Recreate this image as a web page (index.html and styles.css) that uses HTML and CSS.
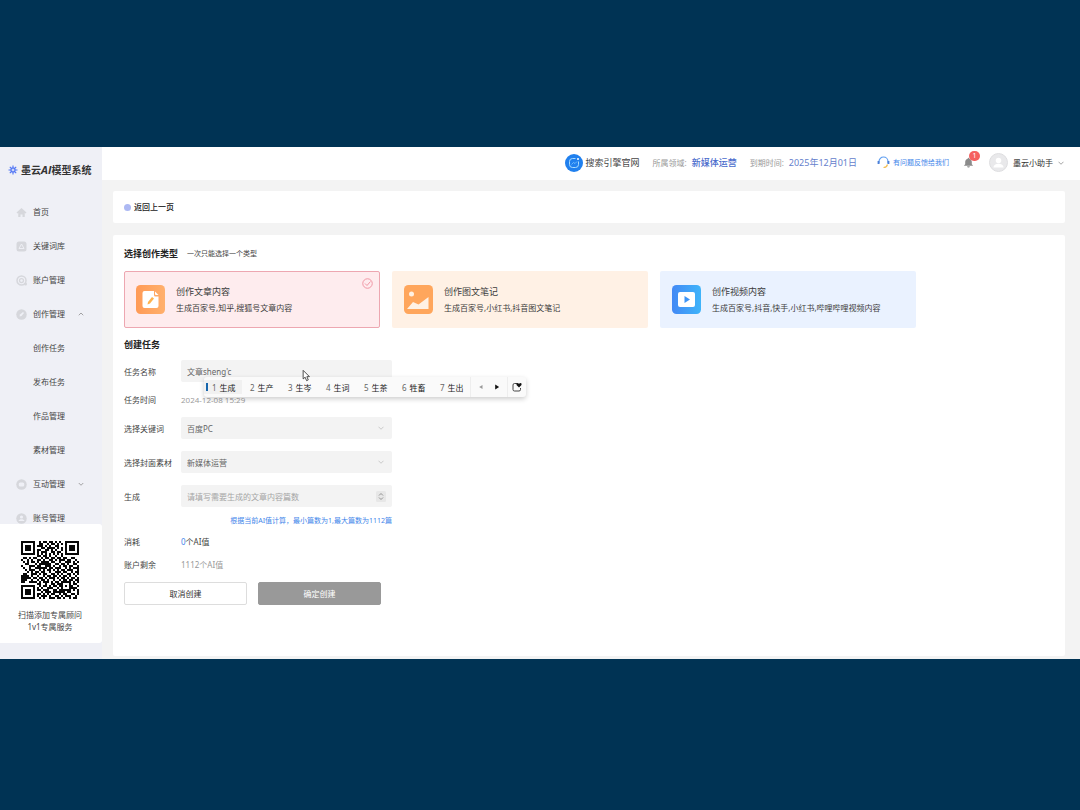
FILE: index.html
```html
<!DOCTYPE html>
<html lang="zh-CN">
<head>
<meta charset="utf-8">
<title>墨云AI模型系统</title>
<link rel="stylesheet" href="styles.css">
</head>
<body>
<div class="app">
  <aside class="sidebar">
    <div class="brand">
      <svg class="brand-mark" viewBox="0 0 20 20" fill="none" stroke="#4f74f5" stroke-width="2.2"><path d="M10 1v18M1 10h18M3.6 3.6l12.8 12.8M16.4 3.6L3.6 16.4"/><circle cx="10" cy="10" r="5" stroke-width="1.2"/><circle cx="10" cy="10" r="2.2" fill="#eff0f6" stroke="none"/></svg>
      <span>墨云<i>AI</i>模型系统</span>
    </div>
    <nav class="nav">
      <a href="#" class="nav-item"><svg class="nav-icon" viewBox="0 0 22 22" fill="#d6d7dc"><path d="M11 2L1 11l2 2 1.500-1V20h4.500v-5h4v5h4.500v-8l1.500 1 2-2z"/></svg>首页</a>
      <a href="#" class="nav-item"><svg class="nav-icon" viewBox="0 0 22 22"><rect x="1" y="1" width="20" height="20" rx="5" fill="#d6d7dc"/><path d="M11 6l-5 9h10z" fill="none" stroke="#eff0f6" stroke-width="1.800"/></svg>关键词库</a>
      <a href="#" class="nav-item"><svg class="nav-icon" viewBox="0 0 22 22"><circle cx="11" cy="11" r="9" fill="none" stroke="#d6d7dc" stroke-width="3"/><circle cx="11" cy="11" r="4" fill="none" stroke="#d6d7dc" stroke-width="2.500"/><circle cx="19" cy="18" r="3" fill="#d6d7dc"/></svg>账户管理</a>
      <a href="#" class="nav-item"><svg class="nav-icon" viewBox="0 0 22 22"><circle cx="11" cy="11" r="10.500" fill="#d6d7dc"/><path d="M7 15l1-4 6-5 2 2-5 6z" fill="#eff0f6"/></svg>创作管理<svg class="chevron" viewBox="0 0 12 12"><path d="M1.500 8.500L6 4l4.500 4.500"/></svg></a>
      <a href="#" class="nav-item nav-sub">创作任务</a>
      <a href="#" class="nav-item nav-sub">发布任务</a>
      <a href="#" class="nav-item nav-sub">作品管理</a>
      <a href="#" class="nav-item nav-sub">素材管理</a>
      <a href="#" class="nav-item"><svg class="nav-icon" viewBox="0 0 22 22"><circle cx="11" cy="11" r="10.500" fill="#d6d7dc"/><rect x="5.500" y="7" width="11" height="8" rx="3" fill="#eff0f6"/></svg>互动管理<svg class="chevron" viewBox="0 0 12 12"><path d="M1.500 4L6 8.500 10.500 4"/></svg></a>
      <a href="#" class="nav-item"><svg class="nav-icon" viewBox="0 0 22 22"><circle cx="11" cy="11" r="10.500" fill="#d6d7dc"/><circle cx="11" cy="8" r="3.200" fill="#eff0f6"/><path d="M5 16c1-5 11-5 12 0z" fill="#eff0f6"/></svg>账号管理</a>
    </nav>
    <div class="contact">
      <svg class="qr" id="qr" viewBox="0 0 29 29" shape-rendering="crispEdges" role="img"></svg>
      <p>扫描添加专属顾问<br>1v1专属服务</p>
    </div>
  </aside>

  <div class="page">
    <header class="topbar">
      <a href="#" class="site"><svg class="site-icon" viewBox="0 0 36 36"><circle cx="18" cy="18" r="18" fill="#2080ee"/><path d="M21 9h-6q-6 0-6 6v6q0 6 6 6h6q6 0 6-6v-6" fill="none" stroke="#a9dcff" stroke-width="2"/><path d="M13 21l4-4 3 2 4-4" fill="none" stroke="#7cc4ff" stroke-width="1.600"/><circle cx="26" cy="10" r="2" fill="#fff"/></svg>搜索引擎官网</a>
      <div class="meta">所属领域: <b>新媒体运营</b></div>
      <div class="meta">到期时间: <span>2025年12月01日</span></div>
      <a href="#" class="feedback"><svg class="feedback-icon" viewBox="0 0 26 26" fill="none" stroke-width="2.400"><path d="M4 15V11a9 9 0 0 1 18 0v4" stroke="#5b9cf0"/><path d="M3 10v6M23 10v6" stroke="#4c7fd8" stroke-width="3.600"/><path d="M21 17c-1 4-4 6-8 6" stroke="#f3bf55"/></svg>有问题反馈给我们</a>
      <button class="bell" aria-label="消息"><svg viewBox="0 0 20 20" fill="#8b8b8b"><path d="M10 1.500c-1 0-1.500.700-1.500 1.500C5.500 3.700 4 6 4 9v4l-2.500 3h17L16 13V9c0-3-1.500-5.300-4.500-6 0-.800-.500-1.500-1.500-1.500zM7.500 17h5c0 3-5 3-5 0z"/></svg><span class="badge">1</span></button>
      <button class="user"><svg class="avatar" viewBox="0 0 38 38"><circle cx="19" cy="19" r="18" fill="#e9e9eb" stroke="#dedee0" stroke-width="2"/><circle cx="19" cy="15" r="5.500" fill="#fff"/><path d="M9 29c0-10 20-10 20 0z" fill="#fff"/></svg>墨云小助手<svg class="chevron" viewBox="0 0 12 12"><path d="M1 3.500L6 8.500l5-5"/></svg></button>
    </header>

    <main class="content">
      <section class="panel back-panel"><a href="#" class="back"><span class="dot"></span>返回上一页</a></section>

      <section class="panel work">
        <div class="heading"><h2>选择创作类型</h2><small>一次只能选择一个类型</small></div>
        <div class="types">
          <button class="type type-article">
            <svg class="type-icon" viewBox="0 0 58 58"><defs><linearGradient id="go" x2="1" y2="0"><stop stop-color="#ff9a56"/><stop offset="1" stop-color="#ffb06c"/></linearGradient></defs><rect width="58" height="58" rx="9" fill="url(#go)"/><path d="M17 12h19v8q0 3 3 3h6v19q0 4-4 4H17q-4 0-4-4V16q0-4 4-4z" fill="#fff"/><path d="M38 13v5q0 2 2 2h5z" fill="#fff"/><path d="M23 39l1-5 8-10 4 3-8 10z" fill="#ffb34d"/></svg>
            <span class="type-text"><span class="type-name">创作文章内容</span><span>生成百家号,知乎,搜狐号文章内容</span></span>
            <svg class="check" viewBox="0 0 22 22" fill="none" stroke="#ee8d9c" stroke-width="1.800"><circle cx="11" cy="11" r="9.500"/><path d="M6 11l4 4 7-8"/></svg>
          </button>
          <button class="type type-note">
            <svg class="type-icon" viewBox="0 0 58 58"><rect width="58" height="58" rx="9" fill="#ffa65c"/><circle cx="15" cy="18" r="5" fill="#fff1e4"/><path d="M6 48l12-14 11 5 20-15v24z" fill="#fff1e4"/></svg>
            <span class="type-text"><span class="type-name">创作图文笔记</span><span>生成百家号,小红书,抖音图文笔记</span></span>
          </button>
          <button class="type type-video">
            <svg class="type-icon" viewBox="0 0 58 58"><defs><linearGradient id="gb" x2="1" y2="0"><stop stop-color="#4389f5"/><stop offset="1" stop-color="#3fb4fa"/></linearGradient></defs><rect width="58" height="58" rx="9" fill="url(#gb)"/><rect x="12" y="14" width="34" height="30" rx="4" fill="#fff"/><path d="M25 22l11 7-11 7z" fill="#3e95f7"/></svg>
            <span class="type-text"><span class="type-name">创作视频内容</span><span>生成百家号,抖音,快手,小红书,哔哩哔哩视频内容</span></span>
          </button>
        </div>

        <h2 class="form-title">创建任务</h2>
        <form class="form">
          <div class="row">
            <label for="name">任务名称</label>
            <div class="field">
              <input class="control" id="name" type="text" value="文章sheng'c">
              <div class="ime">
                <ol class="candidates">
                  <li class="active"><span>1</span>生成</li><li><span>2</span>生产</li><li><span>3</span>生岑</li><li><span>4</span>生词</li><li><span>5</span>生茶</li><li><span>6</span>牲畜</li><li><span>7</span>生出</li>
                </ol>
                <div class="ime-pages"><svg viewBox="0 0 10 10" fill="#999"><path d="M7.500 1.500v7L2 5z"/></svg><svg viewBox="0 0 10 10" fill="#111"><path d="M2 1v8l6.500-4z"/></svg></div>
                <div class="ime-more"><svg viewBox="0 0 20 20"><path d="M10 3H5Q2 3 2 6v9q0 3 3 3h9q3 0 3-3v-3" fill="none" stroke="#333" stroke-width="1.800"/><path d="M14 11L9 6q-1-4 2-4 2 0 3 2 1-2 3-2 3 0 2 4z" fill="#111"/></svg></div>
              </div>
              <svg class="pointer" viewBox="0 0 14 22"><path d="M2 2v15l3.500-3 2.500 6 3-1.300L8.500 13H13z" fill="#fff" stroke="#333" stroke-width="1.500"/></svg>
            </div>
          </div>
          <div class="row"><span>任务时间</span><span class="muted time">2024-12-08 15:29</span></div>
          <div class="row">
            <label for="keyword">选择关键词</label>
            <div class="field"><select class="control" id="keyword"><option>百度PC</option></select><svg class="chevron select-arrow" viewBox="0 0 12 12"><path d="M1 3.500L6 8.500l5-5"/></svg></div>
          </div>
          <div class="row">
            <label for="cover">选择封面素材</label>
            <div class="field"><select class="control" id="cover"><option>新媒体运营</option></select><svg class="chevron select-arrow" viewBox="0 0 12 12"><path d="M1 3.500L6 8.500l5-5"/></svg></div>
          </div>
          <div class="row">
            <label for="count">生成</label>
            <div class="field"><input class="control" id="count" type="text" inputmode="numeric" placeholder="请填写需要生成的文章内容篇数"><svg class="stepper" viewBox="0 0 20 22"><rect width="20" height="22" rx="3" fill="#e7e7e7"/><path d="M6 9l4-4 4 4M6 13l4 4 4-4" fill="none" stroke="#888" stroke-width="1.800"/></svg></div>
          </div>
          <p class="hint">根据当前AI值计算，最小篇数为1,最大篇数为1112篇</p>
          <div class="totals">
            <div class="row"><span>消耗</span><span><em>0</em>个AI值</span></div>
            <div class="row"><span>账户剩余</span><span class="muted">1112个AI值</span></div>
            <div class="actions"><button type="button" class="btn">取消创建</button><button type="button" class="btn btn-ok">确定创建</button></div>
          </div>
        </form>
      </section>
    </main>
  </div>
</div>
<script src="qr.js"></script>
</body>
</html>
```
FILE: styles.css
```css
* { box-sizing: border-box; }
body {
  margin: 0;
  min-height: 100vh;
  padding: 147px 0 151px;
  display: flex;
  background: #003354;
  color: #444;
  font: 8px/12px "Noto Sans", "Noto Sans CJK SC", sans-serif;
}
a { color: inherit; text-decoration: none; }
button, input, select { font: inherit; color: inherit; }
button { border: 0; padding: 0; background: none; }
h2, p, ol { margin: 0; padding: 0; }
svg { display: block; flex: none; }
.app { flex: 1; display: flex; min-width: 0; background: #f3f3f3; }

.sidebar { width: 102px; flex: none; display: flex; flex-direction: column; background: #eff0f6; padding-bottom: 16px; }
.brand { height: 48px; flex: none; display: flex; align-items: center; gap: 3px; padding: 0 0 2px 8px; font-size: 10px; font-weight: 600; color: #333; white-space: nowrap; }
.brand i { font-family: "Open Sans", "Liberation Sans", sans-serif; font-size: 11px; font-weight: 700; }
.brand-mark { width: 10px; height: 10px; }
.nav { flex: 1 1 0; min-height: 320px; overflow: hidden; }
.nav-item { height: 34px; display: flex; align-items: center; padding-left: 16px; }
.nav-icon { width: 11px; height: 11px; margin-right: 6px; }
.nav-sub { padding-left: 33px; }
.chevron { width: 6px; height: 6px; fill: none; stroke: #888; stroke-width: 1.5; }
.nav-item .chevron { margin-left: 13px; }
.contact { flex: none; background: #fff; border-radius: 0 3px 3px 0; padding: 17px 2px 10px 0; text-align: center; }
.qr { width: 58px; height: 58px; margin: 0 auto 10px 21px; fill: #080808; }

.page { flex: 1; min-width: 0; display: flex; flex-direction: column; }
.topbar { height: 33px; background: #fff; display: flex; align-items: center; justify-content: flex-end; padding: 0 16px 2px; white-space: nowrap; }
.site { display: flex; align-items: center; gap: 2px; font-size: 9px; }
.site-icon { width: 18px; height: 18px; }
.meta { display: flex; align-items: center; gap: 5px; margin-left: 13px; color: #999; }
.meta b, .meta span { font-size: 9px; color: #6480cc; }
.meta b { font-weight: 500; color: #4a6ccc; }
.feedback { display: flex; align-items: center; gap: 3px; margin-left: 20px; font-size: 7px; color: #3f86ea; }
.feedback-icon { width: 13px; height: 13px; }
.bell { position: relative; margin-left: 14px; }
.bell svg { width: 11px; height: 11px; }
.badge { position: absolute; left: 6px; top: -6px; width: 11px; height: 10px; border-radius: 5px; background: #f56060; color: #fff; font-size: 7px; line-height: 10px; }
.user { display: flex; align-items: center; gap: 5px; margin-left: 15px; color: #333; }
.avatar { width: 19px; height: 19px; }

.content { flex: 1; display: flex; flex-direction: column; gap: 12px; padding: 11px 15px 3px 11px; }
.panel { background: #fff; border-radius: 2px; padding: 0 11px; }
.back-panel { height: 32px; display: flex; align-items: center; }
.back { display: flex; align-items: center; gap: 3px; font-weight: 500; color: #222; }
.dot { width: 7px; height: 7px; border-radius: 50%; background: #adb9f3; }
.work { flex: 1; padding-top: 13px; }
.heading { display: flex; align-items: center; gap: 9px; }
h2 { font-size: 9px; line-height: 12px; font-weight: 600; color: #222; }
small { font-size: 7px; }
.types { display: grid; grid-template-columns: repeat(3, minmax(0, 256px)); gap: 12px; margin: 11px 0 11px; }
.type { position: relative; height: 57px; display: flex; align-items: center; gap: 11px; padding: 0 11px; border: 1px solid transparent; border-radius: 2px; text-align: left; white-space: nowrap; color: #3c3c3c; }
.type-article { background: #feecee; border-color: #eda7b1; }
.type-note { background: #fff1e5; }
.type-video { background: #eaf2ff; }
.type-icon { width: 29px; height: 29px; }
.type-text { display: flex; flex-direction: column; gap: 4px; }
.type-name { font-size: 9px; }
.check { position: absolute; right: 6px; top: 6px; width: 11px; height: 11px; }

.form { display: flex; flex-direction: column; gap: 12px; margin-top: 9px; max-width: 268px; line-height: 11px; }
.row { display: grid; grid-template-columns: 57px 1fr; align-items: center; }
.muted { color: #999; }
.field { position: relative; }
.control { display: block; width: 100%; height: 22px; padding: 0 6px; border: 0; border-radius: 2px; background: #f3f3f3; color: #666; appearance: none; outline: 0; }
.control::placeholder { color: #a5a5a5; }
.select-arrow, .stepper { position: absolute; right: 8px; top: 8px; pointer-events: none; }
.select-arrow { stroke: #bbb; }
.stepper { right: 6px; top: 6px; width: 10px; height: 11px; }
.ime { position: absolute; z-index: 2; left: 23px; top: 17px; height: 20px; display: flex; align-items: center; background: #fafafa; border-radius: 3px; box-shadow: 0 2px 5px #0003; white-space: nowrap; color: #222; }
.candidates { display: flex; list-style: none; }
.candidates li { display: flex; gap: 3px; width: 38px; height: 14px; align-items: center; padding-left: 8px; }
.candidates span { color: #666; }
.candidates .active { background: linear-gradient(#1766ad, #1766ad) 2px 3px / 2px 8px no-repeat, #f1f1f1; }
.ime-pages, .ime-more { height: 20px; display: flex; align-items: center; border-left: 1px solid #eee; }
.ime-pages { gap: 10px; padding: 0 7px; }
.ime-pages svg { width: 6px; height: 6px; }
.ime-more { padding: 0 4px; }
.ime-more svg { width: 10px; height: 10px; }
.pointer { position: absolute; z-index: 3; left: 121px; top: 9px; width: 8px; height: 13px; }
.time { font-family: "Open Sans", "Noto Sans CJK SC", sans-serif; }
.hint { margin-top: -4px; font-size: 7px; text-align: right; color: #3f86ea; }
.totals { display: flex; flex-direction: column; gap: 12px; margin-top: -2px; }
em { font-style: normal; color: #3f86ea; }
.actions { display: grid; grid-template-columns: 1fr 1fr; gap: 11px; margin-right: 11px; }
.btn { height: 23px; border: 1px solid #ddd; border-radius: 2px; background: #fff; color: #333; }
.btn-ok { background: #999; border-color: #999; color: #fff; }
```
FILE: qr.js
```js
const rows = [
  "11111110010110110101001111111",
  "10000010011001011010101000001",
  "10111010111010100110001011101",
  "10111010001101111010101011101",
  "10111010110011010100101011101",
  "10000010101110011011001000001",
  "11111110101010101010101111111",
  "00000000110110100100100000000",
  "01101011001011011011011001100",
  "10010100110100110101110110010",
  "01010110101111011001001110101",
  "00110001011111100110110100110",
  "10001110110011101001011011001",
  "01001001111110110111001010111",
  "00101110010101101010110111001",
  "00010101101100100111011001011",
  "01100111010110011010100110101",
  "11110100100101101101011010010",
  "11111011011010111010110101101",
  "11100100101101001001011011011",
  "11001111010111010110111110101",
  "00000000110010011011100010110",
  "11111110010110101101101011001",
  "10000010101001110010100011110",
  "10111010110111001101111110101",
  "10111010001011101111110110001",
  "10111010110101011001011001101",
  "10000010101110100110101110010",
  "11111110010100111011010010110"
];
const svg = document.getElementById("qr");
const path = document.createElementNS("http://www.w3.org/2000/svg", "path");
path.setAttribute("d", rows.map((row, y) =>
  [...row].map((cell, x) => cell === "1" ? `M${x} ${y}h1v1h-1z` : "").join("")
).join(""));
svg.append(path);
```
